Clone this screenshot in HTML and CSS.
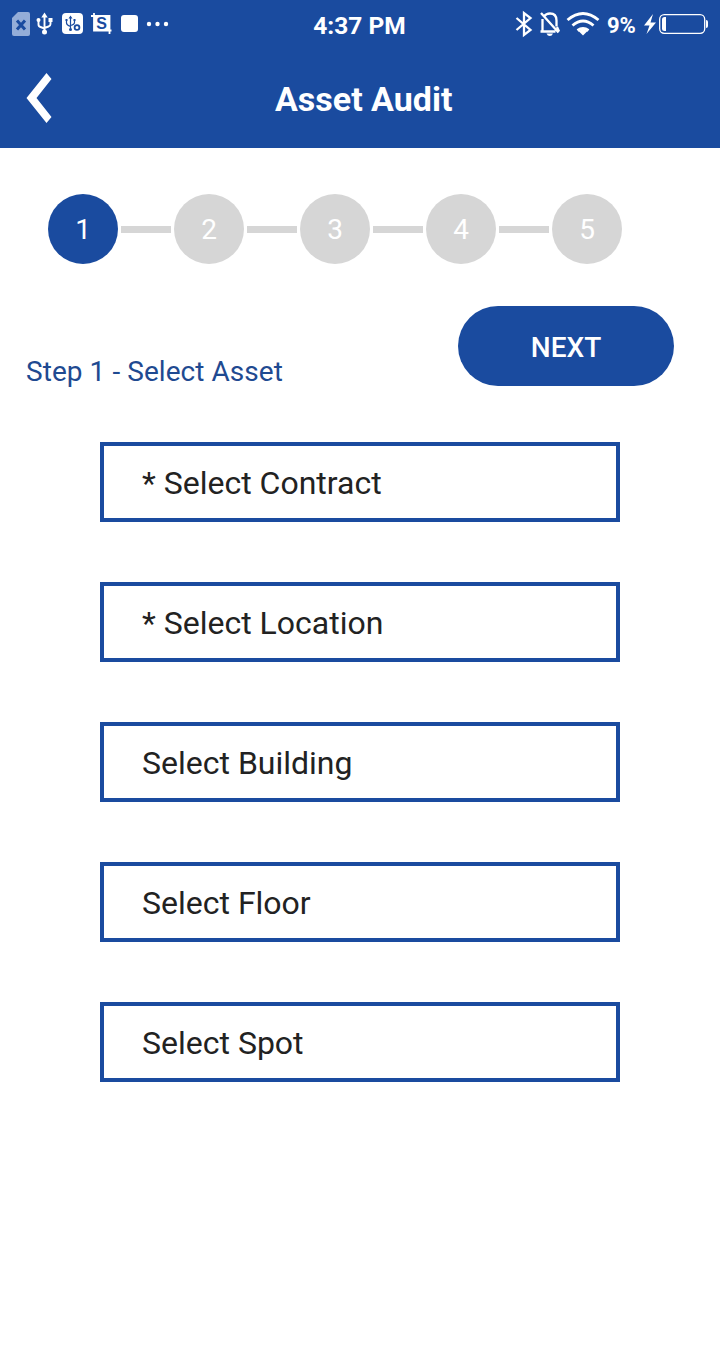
FILE: index.html
```html
<!DOCTYPE html>
<html lang="en">
<head>
<meta charset="utf-8">
<title>Asset Audit</title>
<link rel="stylesheet" href="styles.css">
</head>
<body>
<header class="header">
  <div class="status">
    <div class="status-left">
      <svg class="icon" width="180" height="48" viewBox="0 0 180 48" fill="none">
        <path d="M18 12h10q2 0 2 2v20q0 2-2 2H14q-2 0-2-2V18z" fill="#94add8"/>
        <path d="M17 20.500l8 9M25 20.500l-8 9" stroke="#1a4b9f" stroke-width="3"/>
        <path d="M44.500 16v16M38.500 20v4.500q0 2 2 2.500l4 1.500M50.500 20v4q0 2-2 2.500l-4 1.500" stroke="#fff" stroke-width="1.900"/>
        <path d="M44.500 12.500l3.200 5h-6.400z" fill="#fff"/>
        <circle cx="38.500" cy="20" r="2" fill="#fff"/>
        <path d="M48.500 18h4v4h-4z" fill="#fff"/>
        <circle cx="44.500" cy="32" r="2.500" fill="#fff"/>
        <rect x="62" y="13" width="21" height="21" rx="4" fill="#fff"/>
        <path d="M70.500 18v12M66.500 20v3q0 2 4 3.500M74.500 20v2.500q0 2-4 3" stroke="#1a4b9f" stroke-width="1.200"/>
        <path d="M70.500 15.500l2 3h-4zM65.500 19h2v2h-2zM73.500 19h2v2h-2z" fill="#1a4b9f"/>
        <circle cx="70.500" cy="29.500" r="1.500" fill="#1a4b9f"/>
        <circle cx="77" cy="27.500" r="2.400" stroke="#1a4b9f" stroke-width="1.800"/>
        <path d="M91 16h18.500V34M94 13v17.500h17.500" stroke="#fff" stroke-width="1.800"/>
        <path d="M94 16h15v15H94z" fill="#fff"/>
        <text class="s-mark" x="101.500" y="29" text-anchor="middle">S</text>
        <rect x="121" y="15" width="17" height="17" rx="3" fill="#fff"/>
        <circle cx="149" cy="24" r="2.200" fill="#fff"/>
        <circle cx="157.500" cy="24" r="2.200" fill="#fff"/>
        <circle cx="166" cy="24" r="2.200" fill="#fff"/>
      </svg>
    </div>
    <div class="time">4:37 PM</div>
    <div class="status-right">
      <svg class="icon" width="92" height="48" viewBox="508 0 92 48" fill="none" stroke="#fff" stroke-width="2.300">
        <path d="M516.500 18l14 12-6.500 5V13l6.500 5-14 12"/>
        <path d="M544 16.500q2-3 6-3 6.500 0 6.500 7v6M542.500 19v12M540.500 31.500h15M557 27l2 4.500M541 13l17.500 19.500"/>
        <path d="M546.500 33.500h6.500q-1 2.500-3.200 2.500t-3.300-2.500z" fill="#fff" stroke="none"/>
        <path d="M567.500 20q15.500-13 31 0M572.500 25.500q10.500-9 21 0M577.500 30.500q5.500-4 11 0" stroke-width="2.900"/>
        <path d="M578.500 31q4.500-3 9 0L583 35.500z" fill="#fff" stroke="none"/>
      </svg>
      <span class="percent">9%</span>
      <svg class="icon" width="80" height="48" viewBox="640 0 80 48" fill="none">
        <path d="M653 14l-9 11.500h5.500L646.500 34l9.500-11.500h-5.500z" fill="#fff"/>
        <rect x="659.700" y="14.700" width="45" height="18.600" rx="4.500" stroke="#fff" stroke-width="1.300"/>
        <path d="M666 17v14h-1.500q-2.500 0-2.500-2.500v-9q0-2.500 2.500-2.500z" fill="#fff"/>
        <path d="M706 20q2 0 2 2v4q0 2-2 2z" fill="#fff"/>
      </svg>
    </div>
  </div>
  <div class="titlebar">
    <svg class="back" width="30" height="56" viewBox="24 70 30 56"><path d="M46.500 73L51.500 79 36.500 98l15 19-5 6L26.500 98z" fill="#fff"/></svg>
    <h1 class="title">Asset Audit</h1>
  </div>
</header>
<main>
  <div class="steps">
    <span class="step active">1</span><i class="line"></i>
    <span class="step">2</span><i class="line"></i>
    <span class="step">3</span><i class="line"></i>
    <span class="step">4</span><i class="line"></i>
    <span class="step">5</span>
  </div>
  <div class="step-row">
    <h2 class="step-title">Step 1 - Select Asset</h2>
    <button class="next">NEXT</button>
  </div>
  <div class="fields">
    <div class="field">* Select Contract</div>
    <div class="field">* Select Location</div>
    <div class="field">Select Building</div>
    <div class="field">Select Floor</div>
    <div class="field">Select Spot</div>
  </div>
</main>
</body>
</html>
```
FILE: styles.css
```css
* { box-sizing: border-box; }
body {
  margin: 0;
  min-height: 1356px;
  background: #fff;
  font-family: Roboto, "Liberation Sans", sans-serif;
}
.header { height: 148px; background: #1a4b9f; color: #fff; }
.status { height: 48px; display: grid; grid-template-columns: 260px 199px 261px; }
.icon { display: block; flex: none; }
.s-mark { font: bold 16px "Liberation Sans", sans-serif; fill: #1a4b9f; }
.time { text-align: center; font-size: 24.5px; font-weight: 700; line-height: 52px; white-space: nowrap; }
.status-right { display: flex; justify-content: flex-end; }
.percent { width: 40px; padding-left: 7px; font-size: 22px; font-weight: 700; line-height: 52px; }
.titlebar { height: 100px; padding: 22px 0 0 24px; display: flex; }
.back { display: block; flex: none; }
.title { margin: 0; padding-left: 221px; font-size: 34px; font-weight: 700; line-height: 59px; white-space: nowrap; }
.steps { display: flex; align-items: center; padding: 46px 0 0 48px; }
.step {
  width: 70px;
  height: 70px;
  border-radius: 50%;
  background: #d6d6d6;
  color: #fff;
  font-size: 28px;
  line-height: 71px;
  text-align: center;
}
.step.active { background: #1a4b9f; }
.line { width: 50px; height: 7px; margin: 0 3px; background: #d6d6d6; }
.step-row { display: flex; justify-content: space-between; height: 122px; padding: 42px 46px 0 26px; }
.step-title { margin: 49px 0 0; color: #1f4a91; font-size: 28px; font-weight: 400; line-height: 33px; letter-spacing: 0.06px; }
.next {
  width: 216px;
  height: 80px;
  padding: 3px 0 0;
  border: 0;
  border-radius: 40px;
  background: #1a4b9f;
  color: #fff;
  font: 500 28px Roboto, "Liberation Sans", sans-serif;
}
.fields { display: grid; gap: 60px; padding: 56px 100px 0; }
.field {
  height: 80px;
  padding-left: 38px;
  border: 4px solid #1a4b9f;
  color: #222;
  font-size: 32px;
  line-height: 74px;
}
```
